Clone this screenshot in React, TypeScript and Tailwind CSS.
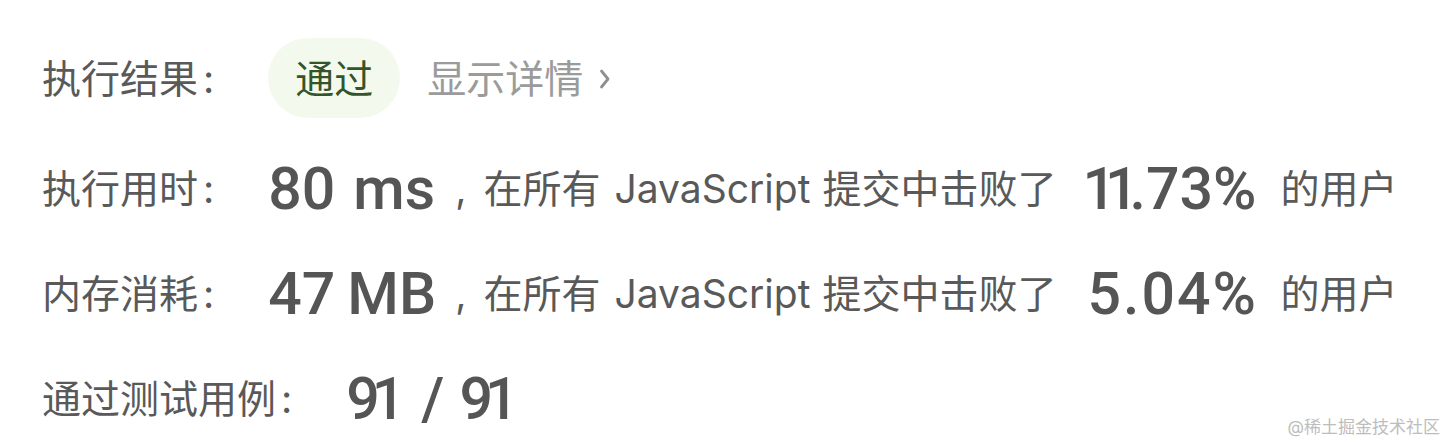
import React from "react";

const cjk = { fontFamily: 'Inter, "Noto Sans CJK SC", sans-serif' };
const num = { fontFamily: 'Roboto, "Liberation Sans", sans-serif' };

type Stat = { label: string; value: string; unit: string; percent: string };

const stats: Stat[] = [
  { label: "执行用时", value: "80", unit: "ms", percent: "11.73%" },
  { label: "内存消耗", value: "47", unit: "MB", percent: "5.04%" },
];

function Label({ children }: { children: React.ReactNode }) {
  return (
    <span className="text-[39px] leading-none text-[#595959] mr-[54px] whitespace-nowrap" style={cjk}>
      {children}
      <span className="ml-[5px]">:</span>
    </span>
  );
}

// DIN-style narrow "1"
function NinetyOne() {
  return (
    <span>
      <span className="tracking-[-8px]">9</span>1
    </span>
  );
}

export default function App() {
  return (
    <div className="relative w-[1450px] h-[442px] overflow-hidden bg-white">
      <div className="flex flex-col gap-[35px] pt-[38px] pl-[42px]">
        {/* Result */}
        <div className="flex items-center h-[80px]">
          <Label>执行结果</Label>
          <span
            className="flex items-center h-[80px] px-[27px] rounded-full bg-[#f4f9ee] text-[39px] leading-none text-[#34552a]"
            style={cjk}
          >
            通过
          </span>
          <span className="ml-[27px] flex items-center text-[39px] leading-none text-[#9b9b9b]" style={cjk}>
            显示详情
            <svg width="12" height="22" viewBox="0 0 12 22" className="ml-[16px] mt-[1px]">
              <polyline points="2.5,3 9,11 2.5,19" fill="none" stroke="#8f8f8f" strokeWidth="2.8" strokeLinecap="round" strokeLinejoin="round" />
            </svg>
          </span>
        </div>

        {/* Time & memory */}
        {stats.map((s) => (
          <div key={s.label} className="flex items-center h-[70px] whitespace-nowrap">
            <Label>{s.label}</Label>
            <span className="w-[187px] text-[59px] leading-none font-medium text-[#555555]" style={num}>
              {s.value}
              <span className={s.unit === "ms" ? "ml-[18px]" : "ml-[12px]"}>{s.unit}</span>
            </span>
            <span className="text-[39px] leading-none text-[#595959]" style={cjk}>
              ,<span className="ml-[17px]">在所有</span>
              <span className="ml-[14px] mr-[12px]">JavaScript</span>提交中击败了
            </span>
            <span className="ml-[26px] w-[198px] text-[59px] leading-none font-medium text-[#555555]" style={num}>
              {s.percent.startsWith("11") ? (
                <>
                  <span className="tracking-[-11px]">11</span>
                  <span className="ml-[2px]">{s.percent.slice(2)}</span>
                </>
              ) : (
                <span className="ml-[5px] tracking-[2px]">{s.percent}</span>
              )}
            </span>
            <span className="text-[39px] leading-none text-[#595959]" style={cjk}>
              的用户
            </span>
          </div>
        ))}

        {/* Test cases */}
        <div className="flex items-center h-[70px] whitespace-nowrap">
          <Label>通过测试用例</Label>
          <span className="text-[59px] leading-none font-medium text-[#555555]" style={num}>
            <NinetyOne />
            <span className="ml-[16px] mr-[15px]">/</span>
            <NinetyOne />
          </span>
        </div>
      </div>

      <span
        className="absolute right-[10px] bottom-[6px] text-[17px] leading-none text-[#bdbdbd]"
        style={cjk}
      >
        @稀土掘金技术社区
      </span>
    </div>
  );
}
